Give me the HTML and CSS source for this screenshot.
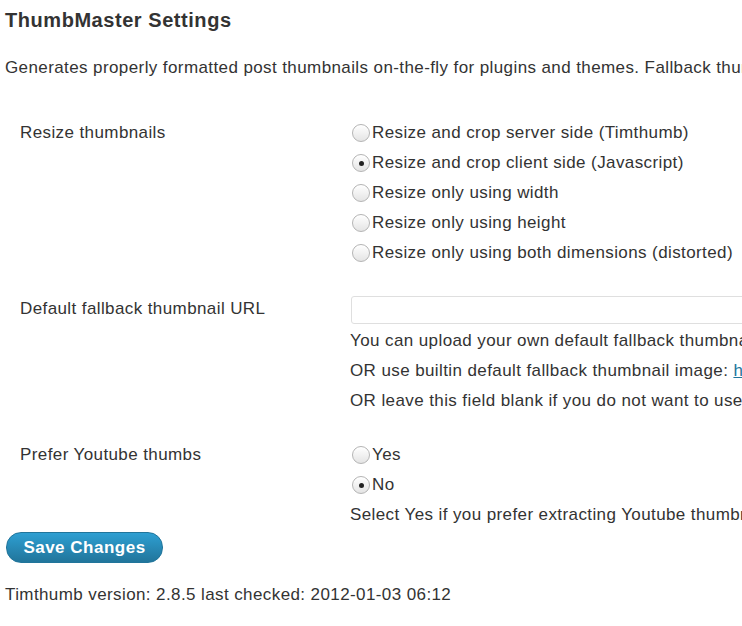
FILE: index.html
```html
<!DOCTYPE html>
<html>
<head>
<meta charset="utf-8">
<link rel="stylesheet" href="styles.css">
</head>
<body>
<div class="wrap">
  <h2 class="title">ThumbMaster Settings</h2>
  <p class="desc">Generates properly formatted post thumbnails on-the-fly for plugins and themes. Fallback thumbnails are used when a post has no image.</p>

  <div class="row row-resize">
    <div class="label">Resize thumbnails</div>
    <div class="value">
      <label class="opt"><input type="radio" name="resize" class="radio">Resize and crop server side (Timthumb)</label>
      <label class="opt"><input type="radio" name="resize" class="radio" checked>Resize and crop client side (Javascript)</label>
      <label class="opt"><input type="radio" name="resize" class="radio">Resize only using width</label>
      <label class="opt"><input type="radio" name="resize" class="radio">Resize only using height</label>
      <label class="opt"><input type="radio" name="resize" class="radio">Resize only using both dimensions (distorted)</label>
    </div>
  </div>

  <div class="row row-fallback">
    <div class="label label-input">Default fallback thumbnail URL</div>
    <div class="value">
      <input type="text" class="text-input">
      <div class="help">You can upload your own default fallback thumbnail image to your media library and paste its URL here.</div>
      <div class="help">OR use builtin default fallback thumbnail image: <a href="#" class="link">http://example.com/wp-content/plugins/thumbmaster/default.png</a></div>
      <div class="help">OR leave this field blank if you do not want to use a fallback thumbnail at all.</div>
    </div>
  </div>

  <div class="row row-youtube">
    <div class="label">Prefer Youtube thumbs</div>
    <div class="value">
      <label class="opt"><input type="radio" name="yt" class="radio">Yes</label>
      <label class="opt"><input type="radio" name="yt" class="radio" checked>No</label>
      <div class="help">Select Yes if you prefer extracting Youtube thumbnails over images attached to the post.</div>
    </div>
  </div>

  <button class="btn" type="button">Save Changes</button>

  <p class="footer">Timthumb version: 2.8.5 last checked: 2012-01-03 06:12</p>
</div>
</body>
</html>
```

FILE: styles.css
```css
html {
  overflow: hidden;
}
body {
  margin: 0;
  background: #fff;
  color: #333;
  font-family: "Liberation Sans", Arial, Helvetica, sans-serif;
  font-size: 17px;
  letter-spacing: 0.4px;
}
.wrap {
  padding-left: 5px;
  white-space: nowrap;
}
.title {
  margin: 0;
  padding-top: 8px;
  font-size: 20px;
  line-height: 24px;
  font-weight: bold;
  letter-spacing: 0.55px;
  color: #333;
}
.desc {
  margin: 26px 0 0 0;
  line-height: 20px;
}
.row {
  display: grid;
  grid-template-columns: 330px 1fr;
  padding-left: 15px;
}
.row-resize {
  margin-top: 40px;
}
.row-fallback {
  margin-top: 28px;
}
.row-youtube {
  margin-top: 24px;
}
.label {
  line-height: 30px;
}
.label-input {
  line-height: 26px;
}
.value {
  display: flex;
  flex-direction: column;
  min-width: 0;
}
.opt {
  display: flex;
  align-items: center;
  height: 30px;
  line-height: 30px;
  padding-left: 2px;
}
.radio {
  appearance: none;
  -webkit-appearance: none;
  width: 18px;
  height: 18px;
  margin: 0 2px 0 0;
  border: 1px solid #b4b4b4;
  border-radius: 50%;
  background: linear-gradient(#ffffff, #e4e4e4);
  box-shadow: inset 0 1px 0 #fff;
  display: grid;
  place-items: center;
  flex: none;
}
.radio:checked::after {
  content: "";
  width: 5px;
  height: 5px;
  border-radius: 50%;
  background: #222;
}
.text-input {
  box-sizing: border-box;
  width: 700px;
  height: 28px;
  margin: 0 0 2px 1px;
  border: 1px solid #dfdfdf;
  border-radius: 3px;
  background: #fff;
  padding: 0 6px;
}
.help {
  line-height: 30px;
}
.link {
  color: #21759b;
}
.btn {
  display: block;
  margin: 2px 0 0 1px;
  width: 157px;
  height: 31px;
  border: 1px solid #21759b;
  border-radius: 15px;
  background: linear-gradient(#2e9fd2, #21759b);
  color: #fff;
  font-family: "Liberation Sans", Arial, Helvetica, sans-serif;
  font-size: 17px;
  font-weight: bold;
  letter-spacing: 0.5px;
  padding: 0;
}
.footer {
  margin: 22px 0 0 0;
  line-height: 20px;
}
```
